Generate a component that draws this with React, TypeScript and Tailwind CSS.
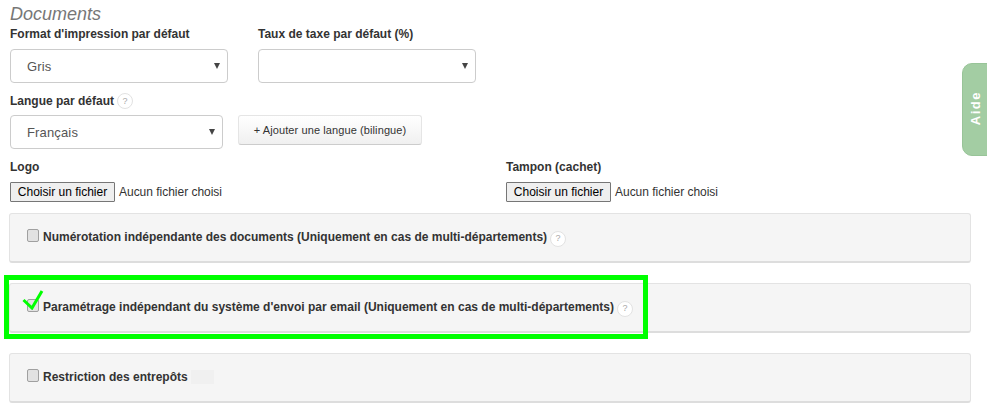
const font = { fontFamily: '"Liberation Sans", Arial, sans-serif' };

function Help() {
  return (
    <span className="inline-flex items-center justify-center w-[16px] h-[16px] rounded-full border border-[#e2e2e2] bg-white text-[9px] font-normal text-[#aaa] leading-none">
      ?
    </span>
  );
}

function Select({ value, width }: { value?: string; width: string }) {
  return (
    <div className={`${width} h-[34px] relative flex items-center pl-[16px] pt-[2px] bg-white border border-[#ccc] rounded-[4px] text-[13px] tracking-[0.15px] text-[#555]`}>
      {value}
      <svg className="absolute right-[7px] top-[13px]" width="6" height="6" viewBox="0 0 6 6">
        <path d="M0 0H6L3 6Z" fill="#444" />
      </svg>
    </div>
  );
}

function FileInput() {
  return (
    <div className="flex items-center h-[20px] text-[12px] text-[#333]">
      <button className="h-[20px] w-[105px] border border-[#767676] bg-[#efefef] text-[12px] text-black rounded-[1px]">
        Choisir un fichier
      </button>
      <span className="ml-[4px] tracking-[-0.02px]">Aucun fichier choisi</span>
    </div>
  );
}

function Panel({ label, help, blank, checked }: { label: string; help?: boolean; blank?: boolean; checked?: boolean }) {
  return (
    <div className="h-[50px] ml-[9px] w-[962px] bg-[#f5f5f5] border border-[#e3e3e3] border-b-2 border-b-[#ddd] rounded-[3px] flex items-center pl-[17px] pb-[2px]">
      <span className="w-[12px] h-[13px] rounded-[2px] border border-[#a0a0a0] bg-[#e2e2e2] mr-[4px] -mt-[3px] shrink-0" />
      <span className="text-[12px] font-bold text-[#333]">{label}</span>
      {help && <span className="ml-[3px] -mt-[1px]"><Help /></span>}
      {blank && <span className="ml-[3px] w-[23px] h-[14px] bg-[#f0f0f0]" />}
      {checked && (
        <svg className="absolute left-[22px] top-[289px]" width="22" height="21" viewBox="0 0 22 21">
          <path d="M1.5 11L10 19L20 2" fill="none" stroke="#00ff00" strokeWidth="3" />
        </svg>
      )}
    </div>
  );
}

export default function App() {
  return (
    <div className="relative w-[987px] h-[408px] overflow-hidden bg-white" style={font}>
      <div className="pt-[4px]">
        <h3 className="ml-[10px] text-[18px] italic text-[#777] leading-[20px]">Documents</h3>

        <div className="flex ml-[10px] mt-[1px] gap-[30px]">
          <div>
            <label className="block text-[12px] font-bold text-[#333] h-[24px] leading-[18px]">Format d'impression par défaut</label>
            <Select value="Gris" width="w-[218px]" />
          </div>
          <div>
            <label className="block text-[12px] font-bold text-[#333] h-[24px] leading-[18px]">Taux de taxe par défaut (%)</label>
            <Select width="w-[218px]" />
          </div>
        </div>

        <div className="ml-[10px] mt-[10px] flex items-center gap-[3px] h-[16px]">
          <label className="text-[12px] font-bold text-[#333]">Langue par défaut</label>
          <Help />
        </div>
        <div className="ml-[10px] mt-[6px] flex items-start gap-[15px]">
          <Select value="Français" width="w-[213px]" />
          <button className="w-[184px] h-[30px] pt-[1px] rounded-[3px] border border-[#e5e5e5] border-b-[#ccc] bg-gradient-to-b from-white to-[#f0f0f0] text-[11px] tracking-[0.1px] text-[#333]">
            + Ajouter une langue (bilingue)
          </button>
        </div>

        <div className="flex ml-[10px] mt-[9px]">
          <div className="w-[496px]">
            <label className="block text-[12px] font-bold text-[#333] h-[24px] leading-[18px]">Logo</label>
            <FileInput />
          </div>
          <div>
            <label className="block text-[12px] font-bold text-[#333] h-[24px] leading-[18px]">Tampon (cachet)</label>
            <FileInput />
          </div>
        </div>

        <div className="mt-[11px] flex flex-col gap-[20px]">
          <Panel label="Numérotation indépendante des documents (Uniquement en cas de multi-départements)" help />
          <Panel label="Paramétrage indépendant du système d'envoi par email (Uniquement en cas de multi-départements)" help checked />
          <Panel label="Restriction des entrepôts" blank />
        </div>
      </div>

      {/* surlignage vert */}
      <div className="absolute left-[4px] top-[275px] w-[644px] h-[64px] border-[5px] border-[#00ff00]" />

      {/* onglet Aide */}
      <div className="absolute left-[962px] top-[63px] w-[40px] h-[93px] rounded-[10px] bg-[#a3cda3] border border-[#98c498] flex items-center pb-[2px] pl-[6px]">
        <span className="rotate-180 [writing-mode:vertical-rl] text-[13px] font-bold tracking-[1.5px] text-white whitespace-nowrap leading-none">Aide</span>
      </div>
    </div>
  );
}
